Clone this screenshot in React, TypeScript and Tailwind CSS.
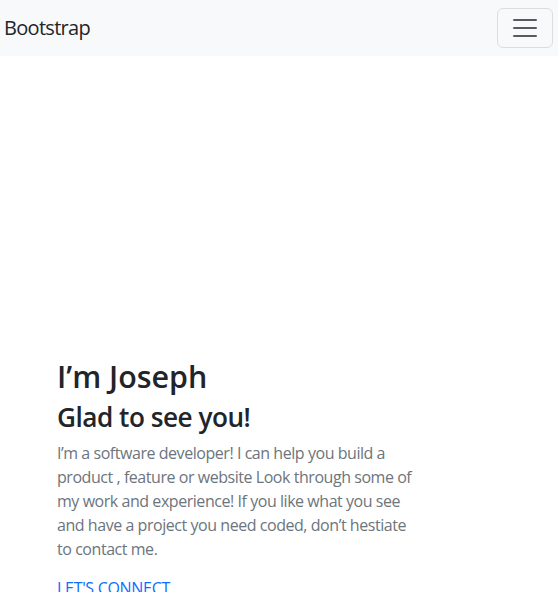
export default function App() {
  return (
    <div className="min-h-screen bg-white font-['Open_Sans','Noto_Sans',sans-serif] text-[#212529]">
      <nav className="flex items-center justify-between bg-[#f8f9fa] py-2 pl-[4px] pr-[5px]">
        <a href="#" className="text-[20px] leading-[30px] text-[#212529] tracking-[-0.7px]">
          Bootstrap
        </a>
        <button className="flex h-[40px] w-[56px] items-center justify-center rounded-[6px] border border-[#dcdddf]">
          <svg width="30" height="30" viewBox="0 0 30 30">
            <path
              d="M4 7h22M4 15h22M4 23h22"
              stroke="rgba(33,37,41,0.75)"
              strokeWidth="2"
              strokeLinecap="round"
            />
          </svg>
        </button>
      </nav>

      <section className="pt-[303px] pl-[57px]">
        <div className="w-[366px]">
          <h1 className="text-[30.4px] font-semibold leading-[1.2]">I’m Joseph</h1>
          <h2 className="mt-[7px] text-[26.2px] font-semibold leading-[1.2] tracking-[-0.5px]">
            Glad to see you!
          </h2>
          <p className="mt-[7px] text-[16px] leading-[24px] text-[#6c757d] tracking-[-0.45px]">
            I’m a software developer! I can help you build a product , feature or website Look
            through some of my work and experience! If you like what you see and have a project
            you need coded, don’t hestiate to contact me.
          </p>
          <a href="#" className="mt-[15px] block text-[16px] leading-[24px] text-[#0d6efd] tracking-[-0.3px]">
            LET'S CONNECT
          </a>
        </div>
      </section>
    </div>
  );
}
